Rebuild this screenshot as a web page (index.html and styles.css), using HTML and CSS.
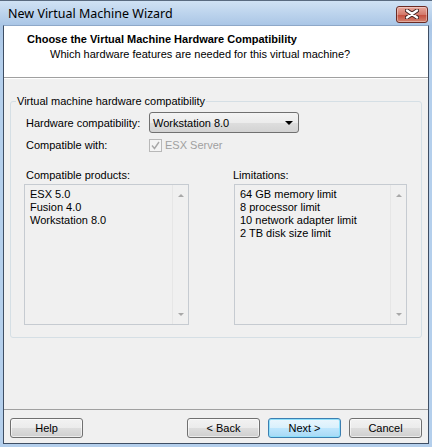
FILE: index.html
```html
<!DOCTYPE html>
<html lang="en">
<head>
    <meta charset="UTF-8">
    <title>New Virtual Machine Wizard</title>
    <link rel="stylesheet" href="styles.css">
</head>
<body>
    <div class="window">
        <div class="titlebar">
            <span class="title">New Virtual Machine Wizard</span>
            <button class="close-btn" type="button">
                <svg width="14" height="10" viewBox="0 0 14 10">
                    <path d="M2 1.5 L12 8.5 M12 1.5 L2 8.5" stroke="#3b2020" stroke-width="4.2" stroke-linecap="round"/>
                    <path d="M2 1.5 L12 8.5 M12 1.5 L2 8.5" stroke="#fff" stroke-width="2.4" stroke-linecap="round"/>
                </svg>
            </button>
        </div>
        <div class="client">
            <div class="header">
                <div class="heading">Choose the Virtual Machine Hardware Compatibility</div>
                <div class="subheading">Which hardware features are needed for this virtual machine?</div>
            </div>
            <div class="content">
                <fieldset class="group">
                    <legend>Virtual machine hardware compatibility</legend>
                    <div class="row first">
                        <span class="label">Hardware compatibility:</span>
                        <div class="select">
                            <span>Workstation 8.0</span>
                            <span class="select-arrow"></span>
                        </div>
                    </div>
                    <div class="row second">
                        <span class="label">Compatible with:</span>
                        <span class="check disabled">
                            <span class="check-box">
                                <svg width="9" height="9" viewBox="0 0 9 9">
                                    <path d="M1 4.5 L3.5 7.5 L8 1" fill="none" stroke="#a8a8a8" stroke-width="1.4"/>
                                </svg>
                            </span>
                            ESX Server
                        </span>
                    </div>
                    <div class="lists">
                        <div class="list-col">
                            <div class="list-label">Compatible products:</div>
                            <div class="listbox">
                                <ul>
                                    <li>ESX 5.0</li>
                                    <li>Fusion 4.0</li>
                                    <li>Workstation 8.0</li>
                                </ul>
                                <div class="scrollbar">
                                    <span class="arrow-up"></span>
                                    <span class="arrow-down"></span>
                                </div>
                            </div>
                        </div>
                        <div class="list-col right">
                            <div class="list-label">Limitations:</div>
                            <div class="listbox">
                                <ul>
                                    <li>64 GB memory limit</li>
                                    <li>8 processor limit</li>
                                    <li>10 network adapter limit</li>
                                    <li>2 TB disk size limit</li>
                                </ul>
                                <div class="scrollbar">
                                    <span class="arrow-up"></span>
                                    <span class="arrow-down"></span>
                                </div>
                            </div>
                        </div>
                    </div>
                </fieldset>
            </div>
            <div class="footer">
                <button class="btn" type="button">Help</button>
                <div class="footer-right">
                    <button class="btn" type="button">&lt; Back</button>
                    <button class="btn default" type="button">Next &gt;</button>
                    <button class="btn" type="button">Cancel</button>
                </div>
            </div>
        </div>
    </div>
</body>
</html>
```

FILE: styles.css
```css
body {
    margin: 0;
    font-family: "Liberation Sans", Arial, sans-serif;
    font-size: 11px;
    color: #000;
}
.window {
    width: 432px;
    height: 447px;
    box-sizing: border-box;
    display: flex;
    flex-direction: column;
    padding: 0 3px 3px 3px;
    border-top: 1px solid #5a6b80;
    background: linear-gradient(#d0e2f4, #aac6e6 24px, #b4cfec 60px, #b4cfec);
}
/* title bar */
.titlebar {
    height: 24px;
    display: flex;
    align-items: center;
    justify-content: space-between;
}
.title {
    font-family: "Noto Sans", "Liberation Sans", sans-serif;
    font-size: 12.5px;
    padding-left: 5px;
    padding-top: 1px;
}
.close-btn {
    width: 32px;
    height: 17px;
    margin-right: 1px;
    margin-top: 2px;
    padding: 0;
    display: flex;
    align-items: center;
    justify-content: center;
    border: 1px solid #6b2b24;
    border-radius: 3px;
    background: linear-gradient(#e8a89c, #d47a6c 50%, #c34b3b 51%, #d3826f);
    box-shadow: inset 0 0 0 1px rgba(255, 255, 255, 0.35);
}
/* client area */
.client {
    flex: 1;
    display: flex;
    flex-direction: column;
    background-color: #f0f0f0;
    border: 1px solid #3e4e64;
    border-top-color: #8ea8c8;
}
.header {
    background-color: #fff;
    border-bottom: 1px solid #a0a0a0;
    box-shadow: 0 1px 0 #fff;
    box-sizing: border-box;
    height: 52px;
    padding: 7px 0 0 23px;
}
.heading {
    font-weight: bold;
    line-height: 13px;
}
.subheading {
    line-height: 13px;
    margin-top: 2px;
    padding-left: 23px;
}
.content {
    flex: 1;
    padding: 17px 6px 0 6px;
}
.group {
    margin: 0;
    padding: 0 14px 12px 13px;
    border: 1px solid #d5dfe5;
    border-radius: 3px;
}
.group legend {
    margin-left: -8px;
    padding: 0 1px;
    line-height: 13px;
}
.row {
    display: flex;
    align-items: center;
}
.row.first {
    height: 21px;
    margin-top: 4px;
}
.row.second {
    height: 14px;
    margin-top: 5px;
}
.label {
    width: 123px;
    padding-left: 2px;
}
.select {
    width: 150px;
    height: 21px;
    box-sizing: border-box;
    display: flex;
    align-items: center;
    justify-content: space-between;
    padding: 0 4px 0 3px;
    border: 1px solid #707070;
    border-radius: 3px;
    background: linear-gradient(#f4f4f4, #ececec 50%, #dedede 51%, #d3d3d3);
}
.select-arrow {
    width: 0;
    height: 0;
    border-left: 4px solid transparent;
    border-right: 4px solid transparent;
    border-top: 4px solid #000;
    margin-right: 1px;
}
.check {
    display: flex;
    align-items: center;
    gap: 3px;
}
.check.disabled {
    color: #a0a0a0;
}
.check-box {
    width: 13px;
    height: 13px;
    box-sizing: border-box;
    display: flex;
    align-items: center;
    justify-content: center;
    border: 1px solid #b8b8b8;
    background-color: #f4f4f4;
}
.lists {
    display: grid;
    grid-template-columns: 165px 1fr;
    column-gap: 45px;
    margin-top: 17px;
}
.list-label {
    line-height: 13px;
    padding-left: 2px;
    margin-bottom: 2px;
}
.right .list-label {
    padding-left: 0;
    margin-left: -1px;
}
.listbox {
    height: 141px;
    box-sizing: border-box;
    display: flex;
    border: 1px solid #c6cbd1;
    background-color: #f0f0f0;
}
.listbox ul {
    flex: 1;
    list-style: none;
    margin: 0;
    padding: 3px 5px;
}
.listbox li {
    line-height: 13px;
}
.scrollbar {
    width: 15px;
    display: flex;
    flex-direction: column;
    justify-content: space-between;
    align-items: center;
    padding: 9px 0 8px;
    border-left: 1px solid #e6e6e6;
}
.arrow-up, .arrow-down {
    width: 0;
    height: 0;
    border-left: 3px solid transparent;
    border-right: 3px solid transparent;
}
.arrow-up {
    border-bottom: 3px solid #a8a8a8;
}
.arrow-down {
    border-top: 3px solid #a8a8a8;
}
/* buttons */
.footer {
    display: flex;
    justify-content: space-between;
    padding: 8px 6px 5px 6px;
    border-top: 1px solid #a0a0a0;
}
.footer-right {
    display: flex;
    gap: 8px;
}
.btn {
    width: 73px;
    height: 20px;
    padding: 0;
    font-family: "Liberation Sans", Arial, sans-serif;
    font-size: 11px;
    color: #000;
    border: 1px solid #707070;
    border-radius: 3px;
    background: linear-gradient(#f2f2f2, #ebebeb 50%, #dddddd 51%, #cfcfcf);
    box-shadow: inset 0 0 0 1px rgba(255, 255, 255, 0.6);
}
.btn.default {
    border-color: #3c7fb1;
    background: linear-gradient(#eaf6fd, #d9f0fc 50%, #bee6fd 51%, #a7d9f5);
    box-shadow: inset 0 0 0 1px #8ee0fb;
}
```
